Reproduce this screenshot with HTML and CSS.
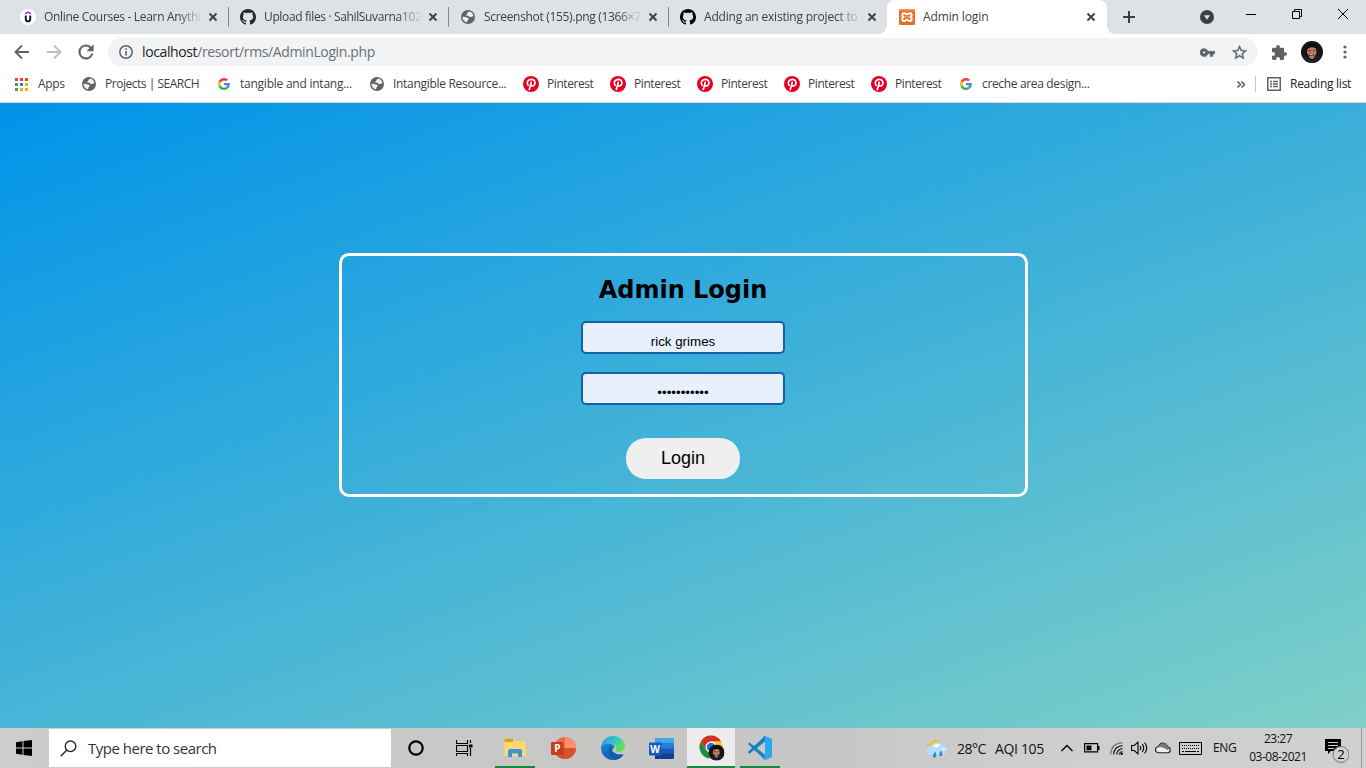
FILE: index.html
```html
<!DOCTYPE html>
<html lang="en">
<head>
<meta charset="utf-8">
<title>Admin login</title>
<link rel="stylesheet" href="styles.css">
</head>
<body>
<svg class="defs" width="0" height="0">
  <symbol id="close" viewBox="0 0 10 10"><path d="M1.500 1.500l7 7M8.500 1.500l-7 7" stroke="#3c4043" stroke-width="1.900" fill="none"/></symbol>
  <symbol id="github" viewBox="0 0 16 16"><path d="M8 0C3.58 0 0 3.58 0 8c0 3.54 2.29 6.53 5.47 7.59.4.07.55-.17.55-.38 0-.19-.01-.82-.01-1.49-2.01.37-2.53-.49-2.69-.94-.09-.23-.48-.94-.82-1.13-.28-.15-.68-.52-.01-.53.63-.01 1.08.58 1.23.82.72 1.21 1.87.87 2.33.66.07-.52.28-.87.51-1.07-1.78-.2-3.64-.89-3.64-3.95 0-.87.31-1.59.82-2.15-.08-.2-.36-1.02.08-2.12 0 0 .67-.21 2.2.82.64-.18 1.32-.27 2-.27s1.36.09 2 .27c1.53-1.04 2.2-.82 2.2-.82.44 1.1.16 1.92.08 2.12.51.56.82 1.27.82 2.15 0 3.07-1.87 3.75-3.65 3.95.29.25.54.73.54 1.48 0 1.07-.01 1.93-.01 2.2 0 .21.15.46.55.38A8.01 8.01 0 0 0 16 8c0-4.42-3.58-8-8-8z"/></symbol>
  <symbol id="globe" viewBox="0 0 14 14"><circle cx="7" cy="7" r="7" fill="#5f6368"/><path d="M1.400 6.800c1.800-.3 3.300-.1 4.400.6.800.5 2 .3 2.100 1.400 0 .9-1.300.900-1.500 1.700l-.3 2C3.400 12 1.500 10 1.400 6.800zM8.200 1.600c-.3.900-1.200.7-1.800 1.200-.6.500.1 1.100-.4 1.600-.4.400-1.300.100-1.300.8.700.6 2.200.2 2.900.8.800.7 1.300 1.400 2.300 1.100.8-.2 1.100-.9 2.500-.6C12.400 4.100 10.700 2 8.200 1.600z" fill="#fff" fill-opacity=".9"/></symbol>
  <symbol id="google" viewBox="0 0 48 48"><path fill="#EA4335" d="M24 9.500c3.540 0 6.710 1.220 9.210 3.600l6.850-6.850C35.900 2.380 30.470 0 24 0 14.620 0 6.510 5.380 2.560 13.220l7.980 6.190C12.430 13.720 17.740 9.500 24 9.500z"/><path fill="#4285F4" d="M46.980 24.550c0-1.570-.15-3.090-.38-4.550H24v9.020h12.940c-.58 2.960-2.260 5.480-4.780 7.180l7.730 6c4.510-4.180 7.090-10.360 7.090-17.650z"/><path fill="#FBBC05" d="M10.530 28.590A14.500 14.500 0 0 1 9.770 24c0-1.600.27-3.140.76-4.590l-7.980-6.190A23.900 23.900 0 0 0 0 24c0 3.880.920 7.540 2.560 10.780l7.970-6.190z"/><path fill="#34A853" d="M24 48c6.480 0 11.930-2.130 15.890-5.810l-7.730-6C30.010 37.640 27.240 38.500 24 38.500c-6.260 0-11.570-4.220-13.470-9.910l-7.980 6.190C6.510 42.620 14.620 48 24 48z"/></symbol>
  <symbol id="pin" viewBox="0 0 24 24"><circle cx="12" cy="12" r="12" fill="#e60023"/><path d="M7.600 14c-3-3.800-.4-9 4.900-9 4.800 0 6.600 4.200 4.700 7.900-1.300 2.500-4.600 2.800-5.500.7M12.300 9.500c-.7 3.400-1.400 6.500-2.900 10.500" fill="none" stroke="#fff" stroke-width="2.600" stroke-linecap="round"/></symbol>
  <symbol id="face" viewBox="0 0 22 22"><circle cx="11" cy="11" r="11" fill="#171412"/><path d="M1.500 15l5 1 5 3 4-4 5 1q-2 5.500-9.500 6-7 0-9.500-7z" fill="#182036"/><path d="M6.500 7q4-3 8.500 0l.5 5-3 5.500q-1.700 1-3.500-.6L6 12z" fill="#b97b64"/><path d="M5 9q0-6 5.800-6.500 6.200.5 5.700 6.500l-2.500-2.300q-4-1-6.500.6z" fill="#100c0b"/><path d="M7.500 9.700H10M12 9.700h2" stroke="#4f3025"/><path d="M7.800 13.300q2.500-1.300 5.500 0l-.7 1.700h-4z" fill="#4a2a25"/><path d="M9 13.700h3" stroke="#ecd9d0"/></symbol>
</svg>

<header class="browser">
  <div class="tabs">
    <div class="tab">
      <svg class="fav" viewBox="0 0 16 16"><circle cx="8" cy="8" r="8" fill="#fff"/><path d="M5.200 5Q8 1.800 10.800 5" fill="none" stroke="#a435f0" stroke-width="1.700"/><path d="M5.800 6.500v3.700q0 2.100 2.200 2.100t2.200-2.100V6.500" fill="none" stroke="#1c1d1f" stroke-width="2"/></svg>
      <span class="label fade t1">Online Courses - Learn Anythi</span><svg class="x"><use href="#close"/></svg>
    </div>
    <div class="tab">
      <svg class="fav dark"><use href="#github"/></svg>
      <span class="label fade t2">Upload files · SahilSuvarna102</span><svg class="x"><use href="#close"/></svg>
    </div>
    <div class="tab">
      <svg class="fav small"><use href="#globe"/></svg>
      <span class="label fade t3">Screenshot (155).png (1366×7</span><svg class="x"><use href="#close"/></svg>
    </div>
    <div class="tab last">
      <svg class="fav"><use href="#github"/></svg>
      <span class="label fade t4">Adding an existing project to</span><svg class="x"><use href="#close"/></svg>
    </div>
    <div class="tab active">
      <svg class="fav" viewBox="0 0 16 16"><rect width="16" height="16" rx="1.500" fill="#ea6f22"/><path d="M1 1h14" stroke="#f6b084"/><path d="M5 4.200C3 4.200 2.700 6.600 4.200 8 2.700 9.500 3 12 5 12c1.600 0 2-1.200 3-1.200s1.400 1.200 3 1.200c2 0 2.300-2.500.8-4 1.500-1.400 1.200-3.800-.8-3.800-1.600 0-2 1.100-3 1.100s-1.400-1.100-3-1.100z" fill="none" stroke="#fff" stroke-width="1.900"/><path d="M6.500 7.500v1M9.500 7.500v1" stroke="#fff" stroke-width="1.400"/></svg>
      <span class="label t5">Admin login</span><svg class="x"><use href="#close"/></svg>
    </div>
    <svg class="plus" viewBox="0 0 12 12"><path d="M6 0v12M0 6h12" stroke="#3c4043" stroke-width="2"/></svg>
    <div class="window">
      <svg width="14" height="14" viewBox="0 0 14 14"><circle cx="7" cy="7" r="7" fill="#3c4043"/><path d="M3.900 5.200h6.200L7 9.700z" fill="#dee1e6"/></svg>
      <svg class="min" width="10" height="10" viewBox="0 0 10 10"><path d="M0 4.500h10" stroke="#000"/></svg>
      <svg class="max" width="10" height="10" viewBox="0 0 10 10"><path d="M.5 2.500h7v7h-7zM2.500 2.500v-2h7v7h-2" fill="none" stroke="#000"/></svg>
      <svg class="end" width="10" height="10" viewBox="0 0 10 10"><path d="M0 0l10 10M10 0L0 10" stroke="#000"/></svg>
    </div>
  </div>

  <div class="toolbar">
    <svg class="nav" viewBox="0 0 16 16"><path d="M15 8H2M8 1.500L1.500 8 8 14.500" fill="none" stroke="#5f6368" stroke-width="1.900"/></svg>
    <svg class="nav" viewBox="0 0 16 16"><path d="M1 8h13M8 1.500L14.500 8 8 14.500" fill="none" stroke="#bcbec1" stroke-width="1.900"/></svg>
    <svg class="nav" viewBox="3.300 3.300 17.400 17.400"><path fill="#5f6368" stroke="#5f6368" stroke-width=".4" d="M17.650 6.350A7.960 7.960 0 0 0 12 4a8 8 0 1 0 7.730 10h-2.080A6 6 0 1 1 12 6c1.660 0 3.140.690 4.220 1.780L13 11h7V4l-2.350 2.350z"/></svg>
    <div class="address">
      <svg width="14" height="14" viewBox="0 0 14 14"><circle cx="7" cy="7" r="6.200" fill="none" stroke="#5f6368" stroke-width="1.500"/><path d="M7 3.200v1.600M7 6v4.500" stroke="#5f6368" stroke-width="1.600"/></svg>
      <span class="url"><b>localhost</b>/resort/rms/AdminLogin.php</span>
      <svg class="key" viewBox="1 6 22 12"><path fill="#5f6368" stroke="#5f6368" stroke-width=".6" d="M12.650 10A5.990 5.990 0 0 0 7 6a6 6 0 1 0 5.650 8H16v4h4v-4h3v-4H12.650zM7 14a2 2 0 1 1 0-4 2 2 0 0 1 0 4z"/></svg>
      <svg class="star" viewBox="2 2 20 20"><path fill="#5f6368" stroke="#5f6368" stroke-width=".4" d="M22 9.240l-7.190-.62L12 2 9.190 8.630 2 9.240l5.460 4.730L5.820 21 12 17.270 18.180 21l-1.630-7.030L22 9.240zM12 15.400l-3.760 2.270 1-4.280-3.320-2.880 4.380-.38L12 6.100l1.710 4.040 4.380.38-3.320 2.880 1 4.280L12 15.400z"/></svg>
    </div>
    <svg class="ext" viewBox="2 1 21 21"><path fill="#5f6368" d="M20.500 11H19V7a2 2 0 0 0-2-2h-4V3.500a2.500 2.500 0 0 0-5 0V5H4a2 2 0 0 0-2 2v3.800h1.500a2.700 2.700 0 0 1 0 5.400H2V20a2 2 0 0 0 2 2h3.800v-1.500a2.700 2.700 0 0 1 5.400 0V22H17a2 2 0 0 0 2-2v-4h1.500a2.500 2.500 0 0 0 0-5z"/></svg>
    <svg class="avatar"><use href="#face"/></svg>
    <svg class="dots" viewBox="0 0 4 14"><g fill="#5f6368"><circle cx="2" cy="2" r="1.600"/><circle cx="2" cy="7" r="1.600"/><circle cx="2" cy="12" r="1.600"/></g></svg>
  </div>

  <nav class="bookmarks">
    <div class="bm apps"><svg viewBox="0 0 13 13"><path d="M0 0h3v3H0zM5 0h3v3H5zM10 0h3v3h-3z" fill="#ea4335"/><path d="M0 5h3v3H0zM0 10h3v3H0z" fill="#34a853"/><path d="M5 5h3v3H5z" fill="#1a82ff"/><path d="M10 5h3v3h-3zM5 10h3v3H5zM10 10h3v3h-3z" fill="#fbae05"/></svg><span>Apps</span></div>
    <div class="bm projects"><svg><use href="#globe"/></svg><span>Projects | SEARCH</span></div>
    <div class="bm tangible"><svg><use href="#google"/></svg><span>tangible and intang...</span></div>
    <div class="bm intangible"><svg><use href="#globe"/></svg><span>Intangible Resource...</span></div>
    <div class="bm pinterest"><svg><use href="#pin"/></svg><span>Pinterest</span></div>
    <div class="bm pinterest"><svg><use href="#pin"/></svg><span>Pinterest</span></div>
    <div class="bm pinterest"><svg><use href="#pin"/></svg><span>Pinterest</span></div>
    <div class="bm pinterest"><svg><use href="#pin"/></svg><span>Pinterest</span></div>
    <div class="bm pinterest"><svg><use href="#pin"/></svg><span>Pinterest</span></div>
    <div class="bm creche"><svg><use href="#google"/></svg><span>creche area design...</span></div>
    <div class="reading">
      <svg width="8" height="7" viewBox="0 0 8 7"><path d="M.5.500L3.500 3.500l-3 3M4.500.500l3 3-3 3" fill="none" stroke="#5f6368" stroke-width="1.600"/></svg>
      <i></i>
      <svg width="14" height="14" viewBox="0 0 14 14"><path d="M.75.750h12.500v12.500H.75z" fill="none" stroke="#5f6368" stroke-width="1.500"/><path d="M3 4.500h2M6 4.500h5M3 7h2M6 7h5M3 9.500h2M6 9.500h5" stroke="#5f6368" stroke-width="1.300"/></svg>
      <span>Reading list</span>
    </div>
  </nav>
</header>

<main class="page">
  <form class="card">
    <h2>Admin Login</h2>
    <input type="text" value="rick grimes">
    <input class="pass" type="password" value="abcdefghijk">
    <button type="button">Login</button>
  </form>
</main>

<footer class="taskbar">
  <div class="start"><svg width="16" height="16" viewBox="0 0 16 16"><path d="M0 2.200L6.500 1.300V7.500H0zM7.500 1.100L16 0v7.500H7.500zM0 8.500h6.500v6.200L0 13.800zM7.500 8.500H16V16l-8.500-1.100z"/></svg></div>
  <div class="search">
    <svg width="17" height="17" viewBox="0 0 17 17"><circle cx="10.500" cy="6.300" r="5.300" fill="none" stroke="#222" stroke-width="1.300"/><path d="M6.700 10.200L.7 16.200" stroke="#222" stroke-width="1.400"/></svg>
    <span>Type here to search</span>
  </div>
  <div class="app first"><svg width="16" height="16" viewBox="0 0 16 16"><circle cx="8" cy="8" r="6.700" fill="none" stroke="#000" stroke-width="2.200"/></svg></div>
  <div class="app view"><svg width="17" height="16" viewBox="0 0 17 16"><path d="M.5 0v3.500h11V0M.5 5.500h11v6H.5zM.5 16v-2.500h11V16M14.500 0v3M14.500 8v8" fill="none" stroke="#000" stroke-width="1.200"/><path d="M13 4.500h3.500v3H13z"/></svg></div>
  <div class="app on"><svg width="22" height="20" viewBox="0 0 22 20"><path d="M.5 1h8l2 2h11v15H.5z" fill="#ffd767"/><path d="M.5 1h8.500v3H.5z" fill="#e0a10a"/><path d="M1 5h20v13H1z" fill="#ffda70"/><path d="M4 19v-6q0-2 2-2h10q2 0 2 2v6h-4v-3.500H8V19z" fill="#3c94d5"/></svg></div>
  <div class="app ppt"><svg width="25" height="22" viewBox="0 0 25 22"><circle cx="14" cy="11" r="11" fill="#ed6c47"/><path d="M14 0a11 11 0 0 1 11 11H14z" fill="#ff8f6b"/><path d="M3 11h22a11 11 0 0 1-22 0z" fill="#d35230"/><rect y="5" width="12.500" height="13" rx="1" fill="#c43e1c"/><text x="6.400" y="15" class="glyph">P</text></svg></div>
  <div class="app edge"><svg width="24" height="24" viewBox="0 0 24 24"><defs><linearGradient id="e1" x2="1" y2=".5"><stop stop-color="#2a96dd"/><stop offset=".5" stop-color="#2fbfd2"/><stop offset="1" stop-color="#68df57"/></linearGradient><linearGradient id="e2" x2="0" y2="1"><stop stop-color="#1688d7"/><stop offset="1" stop-color="#0f62b4"/></linearGradient></defs><path d="M0 12Q0 6 8 6l6 4-3 5 5 3 6.500.5Q19 24 12 24A12 12 0 0 1 0 12z" fill="url(#e2)"/><path d="M0 11C1 4 6 0 12 0c7 0 12 5 12 10.500 0 4-3 5.500-6 5.500-2.500 0-4.200-.8-3.600-1.800 2.300-3.200.3-6.200-4.400-6.200C5 7 1 9 0 11z" fill="url(#e1)"/><path d="M10 9c-5 4-2 13 5 14.600 3-.5 6-2.500 7.500-5.200C16 21 9 17 11 11.500z" fill="#125aa5"/></svg></div>
  <div class="app ppt"><svg width="25" height="21" viewBox="0 0 25 21"><path d="M6 0h18q1 0 1 1v5H6z" fill="#41a5ee"/><path d="M6 5h19v6H6z" fill="#2b7cd3"/><path d="M6 10.500h19V16H6z" fill="#185abd"/><path d="M6 15.500h19V20q0 1-1 1H6z" fill="#103f91"/><rect y="4.500" width="12.500" height="13" rx="1" fill="#185abd"/><text x="6.200" y="15" class="glyph">W</text></svg></div>
  <div class="app on chrome"><svg width="26" height="26" viewBox="0 0 26 26"><circle cx="12" cy="12" r="11.500" fill="#fcc934"/><path d="M2 6.300A11.500 11.500 0 0 1 22 6.300H12l-5 8.600z" fill="#d93025"/><path d="M2 6.300l5 8.600 5 2.900 2 0-4 5.600A11.500 11.500 0 0 1 2 6.300z" fill="#1e8e3e"/><circle cx="12" cy="12" r="5.500" fill="#fff"/><circle cx="12" cy="12" r="4.300" fill="#1a73e8"/><use href="#face" x="9.500" y="9.500" width="16" height="16"/></svg></div>
  <div class="app on code"><svg width="24" height="24" viewBox="0 0 24 24"><path d="M1.500 6.500L17 18.800V24L0 8z" fill="#1781c2"/><path d="M1.500 17.500L17 5.200V0L0 16z" fill="#0e6cad"/><path d="M17 0l7 3v18l-7 3-2-1 2-4.200V5.200L15 1z" fill="#29a8ed"/><path d="M0 16l1.500 1.600L17 5.500V0z" fill="#1781c2"/></svg></div>

  <div class="tray">
    <svg class="weather" viewBox="0 0 22 21"><path d="M9.500 0l2 3.500 2.500-2-.5 5-6 6L2 11l2-2-4-2.500 5.500-1 .2-3.500 2.300 2z" fill="#fbbd17"/><path d="M5 17a4.500 4.500 0 0 1 .2-9C7 3.500 14 2.500 16 7c6-1 8 9 1 10z" fill="#b5dcfa"/><path d="M7 9q3-5.500 8-1.500-3 0-4 3-2-2.500-6-.500zM14 11q5-2.500 5.500 1.500-3-1.500-5.500-1.500z" fill="#f4fbff"/><path d="M9 13.500q-4 6-.5 6t.5-6M15 12.500q-3.500 5.500-.2 5.500t.2-5.500" fill="#2388dc"/></svg>
    <span class="temp">28°C</span><span class="aqi">AQI 105</span>
    <svg class="chev" viewBox="0 0 12 8"><path d="M.5 7L6 1.500 11.500 7" fill="none" stroke="#000" stroke-width="1.300"/></svg>
    <svg class="battery" viewBox="0 0 16 10"><path d="M.6.600h13v8.300H.6z" fill="none" stroke="#000" stroke-width="1.200"/><path d="M14 3h1.500v4H14zM2.500 2.500h5v4.700h-5z"/></svg>
    <svg class="wifi" viewBox="0 0 13 13"><g fill="none" stroke="#222" stroke-width="1.200"><path d="M.7 12.500Q1 1.500 12.500.7" stroke="#777"/><path d="M3.700 12.500Q4 4.500 12.500 3.700M6.700 12.500Q7 7.500 12.500 6.700M9.200 12.500Q9.500 10 12.500 9.500"/></g><circle cx="11.700" cy="11.700" r="1.200"/></svg>
    <svg class="volume" viewBox="0 0 17 14"><path d="M.6 4.500h2.600L7 1.200v11.600L3.200 9.500H.6zM9 5q1.500 2 0 4M11.200 3.200q3 3.800 0 7.600M13.500 1.500q4.500 5.500 0 11" fill="none" stroke="#000" stroke-width="1.100"/></svg>
    <svg class="cloud" viewBox="0 0 16 12"><path d="M3.500 10.800a3 3 0 0 1 0-6Q5 .800 8.500 1.200q3 .3 4 3.500c3.800.5 3.500 5.900 0 6.100z" fill="#eee" stroke="#222" stroke-width="1.100"/><path d="M3.500 4.800Q7 4.800 12.500 8l2-1.500L12.500 4.700Q11.500.700 7.800 1.200 5 1.500 3.500 4.800z" fill="#777"/></svg>
    <svg class="keyboard" viewBox="0 0 23 13"><path d="M.5.500h22v12H.5z" fill="none" stroke="#000"/><path d="M3 3.500h17M3 6.500h17" stroke="#000" stroke-dasharray="1 1"/><path d="M3 9.500h2M6 9.500h11M18 9.500h2" stroke="#000"/></svg>
    <span class="lang">ENG</span>
    <div class="clock"><span>23:27</span><span class="date">03-08-2021</span></div>
    <svg class="notice" viewBox="0 0 24 25"><path d="M0 0h16v12H6l-3 3v-3H0z"/><path d="M3 3.500h10M3 6.500h10M3 9.500h6" stroke="#ccc"/><circle cx="16" cy="15.500" r="8" fill="#d0d0d0" stroke="#777"/><text x="16" y="20" class="count">2</text></svg>
    <i class="peek"></i>
  </div>
</footer>
</body>
</html>
```
FILE: styles.css
```css
* { box-sizing: border-box; }
body { margin: 0; width: 1366px; height: 768px; overflow: hidden; display: flex; flex-direction: column; font: 12px/16px "Open Sans", sans-serif; color: #3c4043; }
svg { display: block; flex: none; }
.defs { display: none; }
.browser { height: 103px; flex: none; background: #fff; border-bottom: 1px solid #d6d8dc; }
.tabs { height: 34px; display: flex; align-items: center; background: #dee1e6; padding-left: 9px; }
.tab { width: 220px; height: 20px; padding: 0 10px 0 11px; display: flex; align-items: center; border-right: 1px solid #85888d; }
.tab.last { border-right: 0; width: 218px; }
.fav { width: 16px; height: 16px; margin-right: 8px; fill: #000; }
.fav.small { width: 14px; height: 14px; margin: 0 9px 0 1px; }
.fav.dark { fill: #24292e; }
.label { flex: 1; min-width: 0; white-space: nowrap; letter-spacing: -.3px; height: 16px; }
.fade { margin-right: 7px; -webkit-mask-image: linear-gradient(90deg, #000 85%, transparent 101%); mask-image: linear-gradient(90deg, #000 85%, transparent 101%); }
.t1 { letter-spacing: -.32px; }
.t2 { letter-spacing: -.36px; }
.t3 { letter-spacing: -.32px; }
.t4 { letter-spacing: -.2px; }
.t5 { letter-spacing: -.12px; }
.x { width: 10px; height: 10px; }
.tab.active { position: relative; height: 34px; background: #fff; border: 0; border-radius: 8px 8px 0 0; padding: 0 11px 0 12px; }
.tab.active::before, .tab.active::after { content: ""; position: absolute; bottom: 0; width: 8px; height: 8px; }
.tab.active::before { left: -8px; background: radial-gradient(circle at 0 0, #dee1e6 7.5px, #fff 8px); }
.tab.active::after { right: -8px; background: radial-gradient(circle at 100% 0, #dee1e6 7.5px, #fff 8px); }
.plus { width: 12px; height: 12px; margin-left: 16px; }
.window { display: flex; align-items: center; margin-left: 65px; }
.min { margin: -5px 0 0 32px; }
.max { margin: -6px 0 0 36px; }
.end { margin: -6px 0 0 36px; }
.toolbar { height: 36px; display: flex; align-items: center; padding-left: 14px; }
.nav { width: 16px; height: 16px; margin-right: 16px; }
.address { width: 1150px; height: 28px; margin-left: -2px; padding: 0 11px; border-radius: 14px; background: #f1f3f4; display: flex; align-items: center; }
.url { flex: 1; margin-left: 9px; font-size: 14px; line-height: 20px; color: #6b6f74; letter-spacing: -.38px; }
.url b { font-weight: 400; color: #202124; }
.key { width: 15px; height: 9px; }
.star { width: 15px; height: 15px; margin-left: 17px; }
.ext { width: 15px; height: 15px; margin-left: 14px; }
.avatar { width: 22px; height: 22px; margin-left: 14px; }
.dots { width: 4px; height: 14px; margin-left: 20px; }
.bookmarks { height: 28px; display: flex; align-items: center; padding-left: 15px; }
.bm { display: flex; align-items: center; white-space: nowrap; letter-spacing: -.3px; }
.bm svg { width: 14px; height: 14px; margin-right: 9px; }
.apps { width: 67px; }
.apps svg { width: 13px; height: 13px; margin-right: 10px; }
.projects { width: 136px; letter-spacing: -.48px; }
.tangible { width: 152px; letter-spacing: -.24px; }
.intangible { width: 153px; }
.pinterest { width: 87px; letter-spacing: -.42px; }
.pinterest svg { width: 16px; height: 16px; margin-right: 8px; }
.creche { width: 279px; padding-left: 2px; letter-spacing: -.34px; }
.tangible svg, .creche svg { width: 12px; height: 12px; margin-right: 10px; }
.reading { display: flex; align-items: center; white-space: nowrap; letter-spacing: -.26px; }
.reading i { width: 1px; height: 16px; margin: 0 11px 0 10px; background: #c4c7cc; }
.reading span { margin-left: 9px; color: #202124; }
.page { flex: 1; display: flex; flex-direction: column; align-items: center; padding-top: 150px; background: linear-gradient(160deg, #0093e9 0%, #80d0c7 100%); }
.card { width: 689px; height: 244px; border: 3px solid #fff; border-radius: 10px; display: flex; flex-direction: column; align-items: center; padding-top: 19px; }
.card h2 { margin: 0 0 16px; font: bold 24px/30px "DejaVu Sans", sans-serif; color: #000; }
.card input { width: 204px; height: 33px; margin: 0 0 18px; padding: 8px 0 0; border: 2px solid #1261a9; border-radius: 5px; background: #e8f0fe; color: #000; font: 13.333px "Liberation Sans", sans-serif; text-align: center; outline: 0; }
.card .pass { margin-bottom: 33px; }
.card button { width: 114px; height: 41px; padding: 0; border: 0; border-radius: 20px; background: #efefef; color: #000; font: 18px "Liberation Sans", sans-serif; }
.taskbar { height: 40px; flex: none; display: flex; align-items: center; background: linear-gradient(90deg, #cdcdcd, #c8c8c7 30%, #c5c6c5 60%, #cdcecd 75%, #d0d0d0); color: #111; }
.start { width: 49px; padding-left: 16px; }
.search { width: 342px; height: 38px; background: #fff; display: flex; align-items: center; padding-left: 11px; font-size: 15px; color: #333; }
.search span { margin: 0 0 1px 11px; letter-spacing: -.5px; white-space: nowrap; }
.app { width: 48px; height: 40px; margin-right: 1px; display: flex; align-items: center; justify-content: center; border-bottom: 2px solid transparent; padding-top: 2px; }
.app.first { margin-left: 1px; margin-right: 0; }
.app.view { margin-right: 3px; }
.app.ppt { padding-right: 1px; }
.app.on { width: 40px; margin: 0 5px 0 4px; border-color: #128a3e; }
.app.chrome { width: 48px; margin: 0 1px 0 0; background: #ececec; padding-left: 2px; }
.glyph { font: bold 10px "Open Sans", sans-serif; fill: #fff; text-anchor: middle; }
.tray { margin-left: auto; display: flex; align-items: center; height: 40px; white-space: nowrap; }
.weather { width: 22px; height: 21px; margin-right: 9px; }
.temp, .aqi { font-size: 14px; letter-spacing: -.5px; margin-top: 1px; }
.temp { width: 38px; }
.aqi { width: 66px; letter-spacing: -.35px; }
.chev { width: 12px; height: 8px; margin-right: 11px; }
.battery { width: 16px; height: 10px; margin-right: 10px; }
.wifi { width: 13px; height: 13px; margin-right: 8px; }
.volume { width: 17px; height: 14px; margin-right: 7px; }
.cloud { width: 16px; height: 12px; margin-right: 8px; }
.keyboard { width: 23px; height: 13px; margin-right: 11px; }
.lang { width: 35px; letter-spacing: -.4px; }
.clock { width: 60px; display: flex; flex-direction: column; align-items: center; line-height: 18px; letter-spacing: -.5px; }
.notice { width: 24px; height: 25px; margin: 6px 12px 0 17px; }
.count { font: 13px "Open Sans", sans-serif; text-anchor: middle; }
.peek { width: 1px; height: 40px; background: #999; margin-right: 4px; }
```
